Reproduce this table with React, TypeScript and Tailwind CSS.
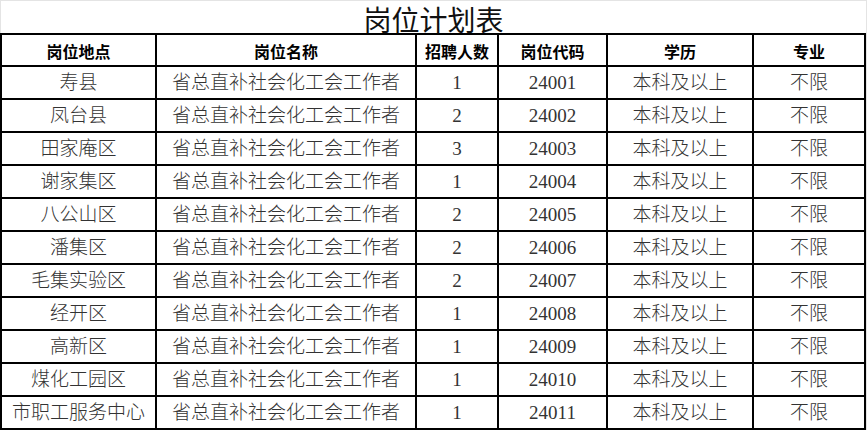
const columns = ["岗位地点", "岗位名称", "招聘人数", "岗位代码", "学历", "专业"];

const rows: [string, number, string][] = [
  ["寿县", 1, "24001"],
  ["凤台县", 2, "24002"],
  ["田家庵区", 3, "24003"],
  ["谢家集区", 1, "24004"],
  ["八公山区", 2, "24005"],
  ["潘集区", 2, "24006"],
  ["毛集实验区", 2, "24007"],
  ["经开区", 1, "24008"],
  ["高新区", 1, "24009"],
  ["煤化工园区", 1, "24010"],
  ["市职工服务中心", 1, "24011"],
];

const grid = "grid grid-cols-[155px_260px_82px_109px_146px_112px]";
const cell = "flex items-center justify-center border-r-2 border-b-2 border-black";

export default function App() {
  return (
    <div className="w-[867px] h-[430px] bg-white border-t border-r border-[#e4e4e4] overflow-hidden">
      <div
        className="h-[32px] flex items-end justify-center border-l border-[#e4e4e4] text-[28px] leading-none text-[#111]"
        style={{ fontFamily: "'Noto Sans CJK SC', sans-serif" }}
      >
        岗位计划表
      </div>
      <div className="w-[866px] border-l-2 border-t-2 border-black">
        <div className={`${grid} h-[32px]`}>
          {columns.map((c) => (
            <div
              key={c}
              className={`${cell} text-[16px] font-bold text-black pt-[1px]`}
              style={{ fontFamily: "'Noto Sans CJK SC', sans-serif" }}
            >
              {c}
            </div>
          ))}
        </div>
        {rows.map(([place, count, code]) => (
          <div
            key={code}
            className={`${grid} h-[33px] text-[19px] font-light text-[#333]`}
            style={{ fontFamily: "'Liberation Serif', 'Noto Sans CJK SC', serif" }}
          >
            <div className={`${cell} pt-[2px]`}>{place}</div>
            <div className={`${cell} pt-[2px]`}>省总直补社会化工会工作者</div>
            <div className={`${cell} pt-[2px]`}>{count}</div>
            <div className={`${cell} pt-[2px]`}>{code}</div>
            <div className={`${cell} pt-[2px]`}>本科及以上</div>
            <div className={`${cell} pt-[2px]`}>不限</div>
          </div>
        ))}
      </div>
    </div>
  );
}
